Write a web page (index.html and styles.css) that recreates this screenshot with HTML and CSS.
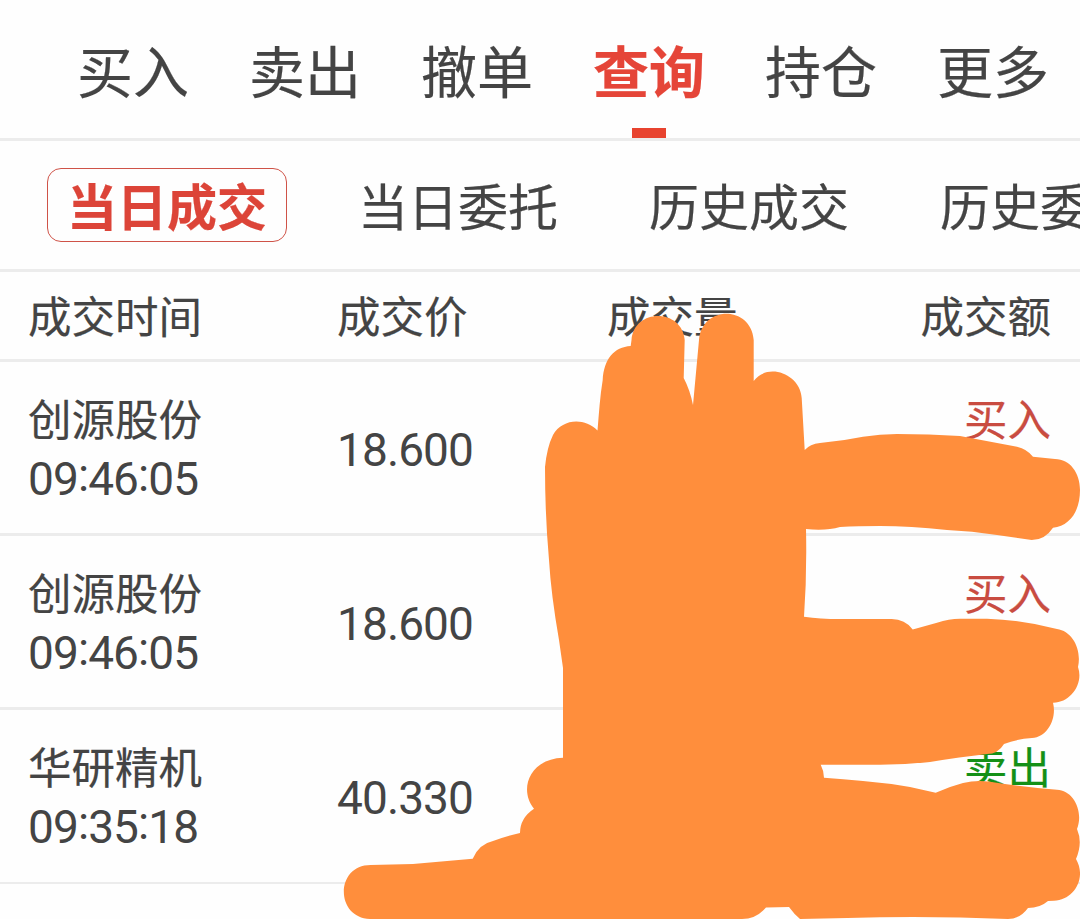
FILE: index.html
```html
<!DOCTYPE html>
<html lang="zh-CN">
<head>
  <meta charset="UTF-8" />
  <meta name="viewport" content="width=device-width, initial-scale=1.0"/>
  <title>当日成交</title>
  <link rel="stylesheet" href="styles.css">
</head>
<body>

  <nav class="main-nav">
    <a href="#">买入</a>
    <a href="#">卖出</a>
    <a href="#">撤单</a>
    <a href="#" class="active">查询</a>
    <a href="#">持仓</a>
    <a href="#">更多</a>
  </nav>

  <nav class="sub-nav">
    <a href="#" class="active">当日成交</a>
    <a href="#">当日委托</a>
    <a href="#">历史成交</a>
    <a href="#">历史委</a>
  </nav>

  <div class="row table-header">
    <span>成交时间</span>
    <span>成交价</span>
    <span>成交量</span>
    <span class="amount">成交额</span>
  </div>

  <div class="row trade">
    <div class="stock">
      <span>创源股份</span>
      <span class="number">09<i>:</i>46<i>:</i>05</span>
    </div>
    <span class="number price">18.600</span>
    <span></span>
    <span class="amount buy">买入</span>
  </div>

  <div class="row trade">
    <div class="stock">
      <span>创源股份</span>
      <span class="number">09<i>:</i>46<i>:</i>05</span>
    </div>
    <span class="number price">18.600</span>
    <span></span>
    <span class="amount buy">买入</span>
  </div>

  <div class="row trade last">
    <div class="stock">
      <span>华研精机</span>
      <span class="number">09<i>:</i>35<i>:</i>18</span>
    </div>
    <span class="number price">40.330</span>
    <span></span>
    <span class="amount sell">卖出</span>
  </div>

  <!-- 遮挡数值的涂抹 -->
  <svg class="marker" viewBox="0 0 1080 919" aria-hidden="true">
    <path d="M545 467 Q547 447 553 435 C562 419 584 417 597.500 430.500
      C599 413 600 396 602.700 380 C604 359 614 347 630.700 346 L631.500 340
      C634 308 682 308 684.700 340 L683.700 378 Q690 390 693 405 L699 340
      C702 305 751 305 753.700 340 V381 C768 362 800 374 801.700 398 L804.700 450
      Q810 444 820 443 Q842 441 863 436.700 Q880 434 897 434 Q929 434 960 436
      L1017 446.700 Q1027 449 1033 456.700 L1055 459 C1070 459 1080 473 1080 490
      C1080 511 1070 526 1053 527.700 Q1045 540 1031.700 540 L997 535
      Q972 531 947 530 Q910 526 880 526 Q858 526 840 527 Q826 531 806 529
      Q807 575 804 616.700 Q820 619 840 619 H891.700 Q905 619 912.700 629.500
      L937 622.700 Q949 618.700 960 618.700 H987 Q1022 620 1057 629
      C1072 631 1082 649 1078 667 C1084 684 1070 703 1053 702.700
      C1057 718 1048 737 1032 738 Q1017 739 1004 744 Q998 754 987 754
      Q960 757 930 762 Q905 764.700 880 764.700 H820.700 Q824 771 824 777.700
      Q843 779 863 781 Q887 783 910 787 L935.700 792.700 Q948 787 963 783
      Q976 780 990 781.700 Q1023 787 1057 789.700 C1073 790 1084 811 1077 829
      Q1083 843 1076 859 C1087 878 1074 900 1054 900.700 L1048 901
      Q1040 908 1028 908 Q1020 919 1008 919 Q960 917 913 917 Q880 917 847 918
      L800 919 Q794 914 789 907 L766 907.500 Q756 919 742 919 H370
      C335 918 335 865 370.700 865 L413 864 L472.700 858.700 Q479 844 493 841
      Q506 836 520 833 Q520 818 534 808.700 C519 791 528 759 563 757.700
      V668 L559 640 Q551 594 549 560 Q545 515 545 467Z" />
  </svg>

</body>
</html>
```

FILE: styles.css
```css
* {
  box-sizing: border-box;
  margin: 0;
  padding: 0;
}

body {
  position: relative;
  width: 1080px;
  height: 919px;
  overflow: hidden;
  background-color: #fefefe;
  color: #444;
  font-family: "Noto Sans CJK SC", sans-serif;
  -webkit-text-stroke: 0.2px;
}

a {
  flex-shrink: 0;
  color: inherit;
  text-decoration: none;
  white-space: nowrap;
}

.main-nav {
  display: flex;
  gap: 60px;
  height: 141px;
  padding-left: 77px;
  border-bottom: 3px solid #ececec;
  font-size: 56px;
  line-height: 138px;
}

.main-nav .active {
  position: relative;
  color: #e54538;
  font-weight: bold;
}

.main-nav .active::after {
  content: "";
  position: absolute;
  left: 39px;
  top: 128px;
  width: 34px;
  height: 10px;
  background-color: #e8432f;
}

.sub-nav {
  display: flex;
  align-items: center;
  gap: 91px;
  height: 131px;
  padding-left: 47px;
  border-bottom: 3px solid #ececec;
  font-size: 50px;
  line-height: 70px;
}

.sub-nav .active {
  width: 240px;
  height: 74px;
  margin-right: -20px;
  border: 1px solid #cf5348;
  border-radius: 14px;
  color: #dc4438;
  font-weight: bold;
  text-align: center;
}

.sub-nav a:not(.active) {
  height: 72px;
}

.row {
  display: grid;
  grid-template-columns: 309px 270px 1fr 180px;
  padding: 0 29px 0 28px;
  border-bottom: 3px solid #ececec;
  font-size: 43.5px;
}

.table-header {
  height: 90px;
  line-height: 85px;
}

.trade {
  height: 174px;
  padding-top: 26px;
  line-height: 60px;
}

.trade.last {
  border-bottom-width: 2px;
}

.stock span {
  display: block;
}

.stock .number {
  padding-top: 1px;
}

.number {
  font-family: Roboto, sans-serif;
  font-size: 46px;
  letter-spacing: -0.9px;
  -webkit-text-stroke: 0;
}

.number i {
  position: relative;
  top: -4px;
  font-style: normal;
}

.price {
  padding-top: 32px;
}

.amount {
  text-align: right;
}

.buy {
  color: #c94c41;
}

.sell {
  color: #149017;
}

.marker {
  position: absolute;
  left: 0;
  top: 0;
  width: 1080px;
  height: 919px;
  fill: #ff8e3c;
}
```
